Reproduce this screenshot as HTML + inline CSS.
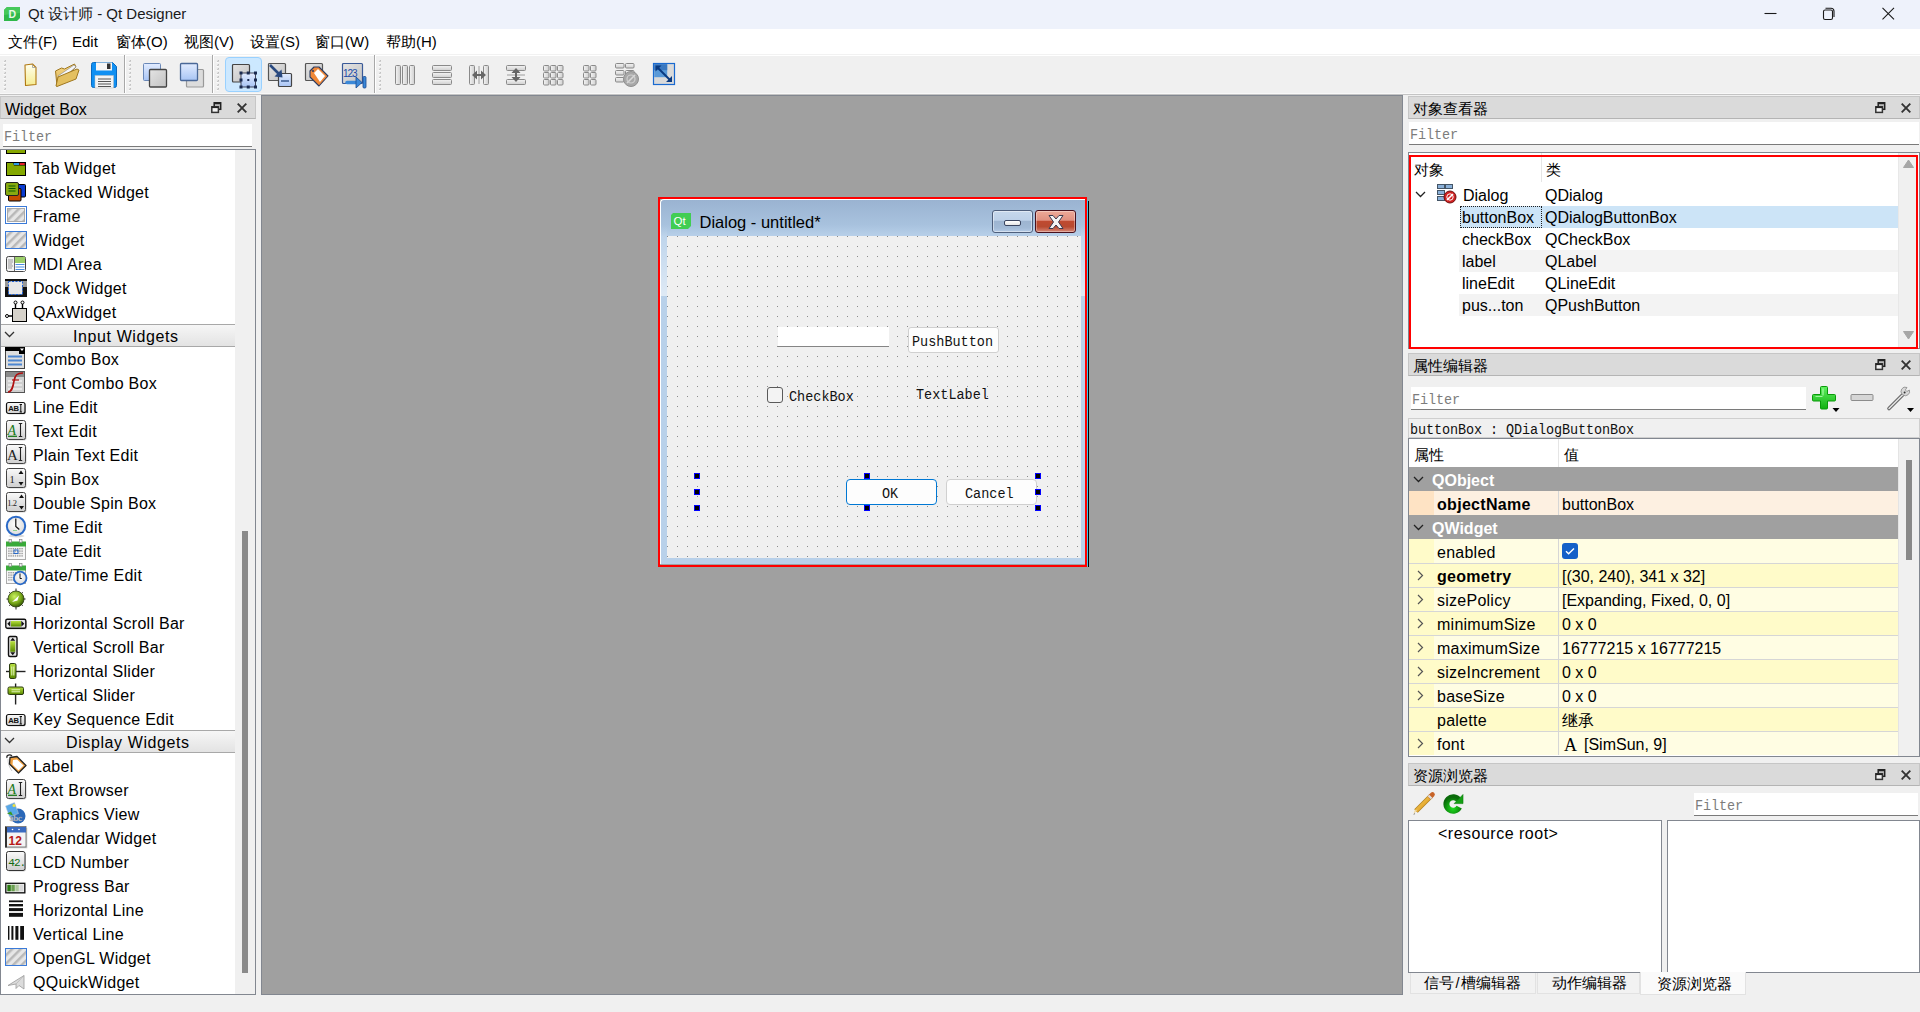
<!DOCTYPE html><html><head><meta charset="utf-8"><style>
*{margin:0;padding:0;box-sizing:border-box}
html,body{width:1920px;height:1012px;overflow:hidden;background:#f0f0f0;font-family:"Liberation Sans",sans-serif;font-size:16px;color:#000}
div{position:absolute}
.t{height:24px;line-height:24px;white-space:nowrap}
.dm{font-family:"Liberation Serif",serif;font-size:15px}
.m{font-family:"Liberation Mono",monospace;font-size:13.33px}
svg{position:absolute;overflow:visible}
</style></head><body>
<div style="left:0px;top:0px;width:1920px;height:29px;background:#eef2fb"></div>
<div class="t" style="left:28px;top:2px;font-size:15px;color:#1a1a1a">Qt 设计师 - Qt Designer</div>
<svg style="left:4px;top:7px" width="16" height="14" viewBox="0 0 16 14"><path d="M3 0H16V11L13 14H0V3z" fill="#2fb84a"/><path d="M0 3L3 0H16V6L0 8z" fill="#45c85a"/><text x="4.5" y="11.3" font-family="Liberation Sans" font-size="10.5" font-weight="bold" fill="#e8f8e8">D</text></svg>
<svg style="left:1764px;top:7px" width="140" height="15" viewBox="0 0 140 15"><path d="M0.5 6.5h12" stroke="#1a1a1a" stroke-width="1.1"/><rect x="59.5" y="3" width="9" height="9.5" rx="1.6" fill="none" stroke="#1a1a1a" stroke-width="1.1"/><path d="M61.5 1.2h5.5a3 3 0 0 1 3 3v5.8" stroke="#1a1a1a" stroke-width="1.1" fill="none"/><path d="M118.5 0.8L130 12.3M130 0.8L118.5 12.3" stroke="#1a1a1a" stroke-width="1.1"/></svg>
<div style="left:0px;top:29px;width:1920px;height:25px;background:#fff"></div>
<div style="left:0px;top:54px;width:1920px;height:1px;background:#f2f2f2"></div>
<div style="left:0px;top:55px;width:1920px;height:1px;background:#fff"></div>
<div class="t" style="left:8px;top:30px;font-size:15px">文件(F)</div>
<div class="t" style="left:72px;top:30px;font-size:15px">Edit</div>
<div class="t" style="left:116px;top:30px;font-size:15px">窗体(O)</div>
<div class="t" style="left:184px;top:30px;font-size:15px">视图(V)</div>
<div class="t" style="left:250px;top:30px;font-size:15px">设置(S)</div>
<div class="t" style="left:315px;top:30px;font-size:15px">窗口(W)</div>
<div class="t" style="left:386px;top:30px;font-size:15px">帮助(H)</div>
<div style="left:0px;top:56px;width:1920px;height:38px;background:#f0f0f0"></div>
<div style="left:0px;top:93px;width:1920px;height:1px;background:#f8f8f8"></div>
<div style="left:0px;top:94px;width:1920px;height:1px;background:#c4c4c4"></div>
<svg width="0" height="0" style="position:absolute"><defs>
<linearGradient id="gsq" x1="0" y1="0" x2="1" y2="1"><stop offset="0" stop-color="#e4e4e4"/><stop offset="1" stop-color="#c2c2c2"/></linearGradient>
<linearGradient id="bsq" x1="0" y1="0" x2="0" y2="1"><stop offset="0" stop-color="#e2ecff"/><stop offset="1" stop-color="#a8c4f4"/></linearGradient>
<linearGradient id="bar" x1="0" y1="0" x2="1" y2="0"><stop offset="0" stop-color="#f4f4f4"/><stop offset="1" stop-color="#cfcfcf"/></linearGradient>
<linearGradient id="barv" x1="0" y1="0" x2="0" y2="1"><stop offset="0" stop-color="#f4f4f4"/><stop offset="1" stop-color="#cfcfcf"/></linearGradient>
<linearGradient id="doc" x1="0" y1="0" x2="0" y2="1"><stop offset="0" stop-color="#fffff0"/><stop offset="1" stop-color="#f6ec90"/></linearGradient>
<linearGradient id="fold" x1="0" y1="0" x2="0" y2="1"><stop offset="0" stop-color="#f8d888"/><stop offset="1" stop-color="#d8b050"/></linearGradient>
</defs></svg>
<svg style="left:0;top:0" width="700" height="95" viewBox="0 0 700 95"><path d="M4 61.5l1.6-1.6v1.6z" fill="#8a8a8a"/><rect x="3.5" y="62" width="2" height="0.8" fill="#fff"/><path d="M4 65.5l1.6-1.6v1.6z" fill="#8a8a8a"/><rect x="3.5" y="66" width="2" height="0.8" fill="#fff"/><path d="M4 69.5l1.6-1.6v1.6z" fill="#8a8a8a"/><rect x="3.5" y="70" width="2" height="0.8" fill="#fff"/><path d="M4 73.5l1.6-1.6v1.6z" fill="#8a8a8a"/><rect x="3.5" y="74" width="2" height="0.8" fill="#fff"/><path d="M4 77.5l1.6-1.6v1.6z" fill="#8a8a8a"/><rect x="3.5" y="78" width="2" height="0.8" fill="#fff"/><path d="M4 81.5l1.6-1.6v1.6z" fill="#8a8a8a"/><rect x="3.5" y="82" width="2" height="0.8" fill="#fff"/><path d="M4 85.5l1.6-1.6v1.6z" fill="#8a8a8a"/><rect x="3.5" y="86" width="2" height="0.8" fill="#fff"/><path d="M4 89.5l1.6-1.6v1.6z" fill="#8a8a8a"/><rect x="3.5" y="90" width="2" height="0.8" fill="#fff"/><path d="M129 61.5l1.6-1.6v1.6z" fill="#8a8a8a"/><rect x="128.5" y="62" width="2" height="0.8" fill="#fff"/><path d="M129 65.5l1.6-1.6v1.6z" fill="#8a8a8a"/><rect x="128.5" y="66" width="2" height="0.8" fill="#fff"/><path d="M129 69.5l1.6-1.6v1.6z" fill="#8a8a8a"/><rect x="128.5" y="70" width="2" height="0.8" fill="#fff"/><path d="M129 73.5l1.6-1.6v1.6z" fill="#8a8a8a"/><rect x="128.5" y="74" width="2" height="0.8" fill="#fff"/><path d="M129 77.5l1.6-1.6v1.6z" fill="#8a8a8a"/><rect x="128.5" y="78" width="2" height="0.8" fill="#fff"/><path d="M129 81.5l1.6-1.6v1.6z" fill="#8a8a8a"/><rect x="128.5" y="82" width="2" height="0.8" fill="#fff"/><path d="M129 85.5l1.6-1.6v1.6z" fill="#8a8a8a"/><rect x="128.5" y="86" width="2" height="0.8" fill="#fff"/><path d="M129 89.5l1.6-1.6v1.6z" fill="#8a8a8a"/><rect x="128.5" y="90" width="2" height="0.8" fill="#fff"/><path d="M217 61.5l1.6-1.6v1.6z" fill="#8a8a8a"/><rect x="216.5" y="62" width="2" height="0.8" fill="#fff"/><path d="M217 65.5l1.6-1.6v1.6z" fill="#8a8a8a"/><rect x="216.5" y="66" width="2" height="0.8" fill="#fff"/><path d="M217 69.5l1.6-1.6v1.6z" fill="#8a8a8a"/><rect x="216.5" y="70" width="2" height="0.8" fill="#fff"/><path d="M217 73.5l1.6-1.6v1.6z" fill="#8a8a8a"/><rect x="216.5" y="74" width="2" height="0.8" fill="#fff"/><path d="M217 77.5l1.6-1.6v1.6z" fill="#8a8a8a"/><rect x="216.5" y="78" width="2" height="0.8" fill="#fff"/><path d="M217 81.5l1.6-1.6v1.6z" fill="#8a8a8a"/><rect x="216.5" y="82" width="2" height="0.8" fill="#fff"/><path d="M217 85.5l1.6-1.6v1.6z" fill="#8a8a8a"/><rect x="216.5" y="86" width="2" height="0.8" fill="#fff"/><path d="M217 89.5l1.6-1.6v1.6z" fill="#8a8a8a"/><rect x="216.5" y="90" width="2" height="0.8" fill="#fff"/><path d="M379 61.5l1.6-1.6v1.6z" fill="#8a8a8a"/><rect x="378.5" y="62" width="2" height="0.8" fill="#fff"/><path d="M379 65.5l1.6-1.6v1.6z" fill="#8a8a8a"/><rect x="378.5" y="66" width="2" height="0.8" fill="#fff"/><path d="M379 69.5l1.6-1.6v1.6z" fill="#8a8a8a"/><rect x="378.5" y="70" width="2" height="0.8" fill="#fff"/><path d="M379 73.5l1.6-1.6v1.6z" fill="#8a8a8a"/><rect x="378.5" y="74" width="2" height="0.8" fill="#fff"/><path d="M379 77.5l1.6-1.6v1.6z" fill="#8a8a8a"/><rect x="378.5" y="78" width="2" height="0.8" fill="#fff"/><path d="M379 81.5l1.6-1.6v1.6z" fill="#8a8a8a"/><rect x="378.5" y="82" width="2" height="0.8" fill="#fff"/><path d="M379 85.5l1.6-1.6v1.6z" fill="#8a8a8a"/><rect x="378.5" y="86" width="2" height="0.8" fill="#fff"/><path d="M379 89.5l1.6-1.6v1.6z" fill="#8a8a8a"/><rect x="378.5" y="90" width="2" height="0.8" fill="#fff"/><rect x="124" y="55" width="1" height="38" fill="#a8a8a8"/><rect x="212" y="55" width="1" height="38" fill="#a8a8a8"/><rect x="374" y="55" width="1" height="38" fill="#a8a8a8"/><rect x="125" y="55" width="1" height="38" fill="#fff"/><rect x="213" y="55" width="1" height="38" fill="#fff"/><rect x="375" y="55" width="1" height="38" fill="#fff"/></svg>
<svg style="left:22px;top:62px" width="18" height="26" viewBox="0 0 18 26"><path d="M3 3L10.5 2 14 5.5v17L3.5 23.5z" fill="url(#doc)" stroke="#b07810" stroke-width="1.1" stroke-linejoin="round"/><path d="M10.5 2.5v3H14" stroke="#999" fill="none" stroke-width=".8"/></svg>
<svg style="left:54px;top:62px" width="27" height="27" viewBox="0 0 27 27"><path d="M1.5 9l6-3 3 1 10-5 1.5 3-19 19z" fill="url(#fold)" stroke="#a07820" stroke-width="1"/><path d="M4 14l16-11 2 2-16 13z" fill="#f4f6fa" stroke="#888" stroke-width=".6"/><path d="M2 24l2-9 19-8 2 1-3 9-19 7.5z" fill="#e4c060" stroke="#a07820" stroke-width="1" stroke-linejoin="round"/></svg>
<svg style="left:90px;top:61px" width="28" height="28" viewBox="0 0 28 28"><path d="M1.5 3.5a2 2 0 0 1 2-2h19l4 4v19a2 2 0 0 1-2 2h-21a2 2 0 0 1-2-2z" fill="#1190f2" stroke="#0a6ac0" stroke-width="1"/><rect x="6" y="1.5" width="16" height="8" fill="#f6f6f6"/><rect x="17" y="2.5" width="3.5" height="5.5" fill="#333"/><rect x="5" y="14.5" width="18.5" height="12.5" fill="#f4f4f4" stroke="#bbb" stroke-width=".5"/><path d="M8 18h13M8 20.5h13M8 23h13M8 25.5h13" stroke="#555" stroke-width="1"/></svg>
<svg style="left:142px;top:62px" width="26" height="27" viewBox="0 0 26 27"><rect x="1.5" y="1.5" width="17" height="17" rx="1" fill="url(#bsq)" stroke="#6a88b8"/><rect x="7.5" y="7.5" width="17" height="17.5" rx="1" fill="url(#gsq)" stroke="#444" stroke-width="1.3"/></svg>
<svg style="left:179px;top:62px" width="26" height="27" viewBox="0 0 26 27"><rect x="7.5" y="7.5" width="17" height="17.5" rx="1" fill="#dcdcdc" stroke="#999" stroke-width="1.2"/><rect x="1.5" y="1.5" width="17" height="17" rx="1" fill="url(#bsq)" stroke="#4a6898" stroke-width="1.3"/></svg>
<div style="left:225px;top:57px;width:37px;height:35px;background:#cce8ff;border:1px solid #99d1ff;border-radius:4px"></div>
<svg style="left:231px;top:63px" width="27" height="27" viewBox="0 0 27 27"><rect x="1.5" y="1.5" width="17" height="17.5" rx="1" fill="url(#gsq)" stroke="#444" stroke-width="1.2"/><rect x="10" y="10" width="14.5" height="14" fill="url(#bsq)" stroke="#223" stroke-width=".8"/><rect x="8.5" y="8.5" width="3" height="3" fill="#1a2a50"/><rect x="8.5" y="15.5" width="3" height="3" fill="#1a2a50"/><rect x="8.5" y="22.5" width="3" height="3" fill="#1a2a50"/><rect x="15.75" y="8.5" width="3" height="3" fill="#1a2a50"/><rect x="15.75" y="22.5" width="3" height="3" fill="#1a2a50"/><rect x="23.0" y="8.5" width="3" height="3" fill="#1a2a50"/><rect x="23.0" y="15.5" width="3" height="3" fill="#1a2a50"/><rect x="23.0" y="22.5" width="3" height="3" fill="#1a2a50"/><rect x="16.3" y="16" width="2" height="2" fill="#1a2a50"/></svg>
<svg style="left:267px;top:62px" width="26" height="26" viewBox="0 0 26 26"><rect x="1.5" y="1.5" width="17" height="17" rx="1" fill="url(#gsq)" stroke="#555" stroke-width="1.2"/><rect x="11.5" y="11.5" width="13" height="13" rx="1" fill="url(#bsq)" stroke="#444" stroke-width="1.2"/><path d="M14 19h8" stroke="#5a78a8" stroke-width="2"/><path d="M3 3l10 10" stroke="#2a4a80" stroke-width="2.6"/><path d="M15.5 15.5l-8-1 7-7z" fill="#2a4a80"/></svg>
<svg style="left:304px;top:62px" width="26" height="27" viewBox="0 0 26 27"><rect x="1.5" y="1.5" width="17" height="17" rx="1" fill="url(#gsq)" stroke="#555" stroke-width="1.2"/><path d="M6 9l4-4h5l9 9-9 10-9-9z" fill="#f08838" stroke="#2a3a60" stroke-width="1.1" stroke-linejoin="round"/><path d="M10 11l4-4 7 7-5 6z" fill="#fff"/><circle cx="9" cy="9" r="1" fill="#2a3a60"/></svg>
<svg style="left:341px;top:62px" width="27" height="27" viewBox="0 0 27 27"><rect x="1.5" y="1.5" width="20" height="20" rx="1" fill="url(#gsq)" stroke="#3a5a98" stroke-width="1.2"/><text x="2" y="14.5" font-family="Liberation Sans" font-size="10" fill="#1a4aa8" letter-spacing="-1">123</text><path d="M6 20.5h10" stroke="#3a88d8" stroke-width="3.5" stroke-linecap="round"/><path d="M15 15l6 5.5-6 5.5z" fill="#3a88d8" stroke="#1a4a90" stroke-width=".8"/><rect x="22" y="14.5" width="3" height="11.5" rx="1" fill="#3a88d8" stroke="#1a4a90" stroke-width=".8"/></svg>
<svg style="left:395px;top:65px" width="21" height="21" viewBox="0 0 21 21"><rect x="0.5" y="0.5" width="5" height="19" rx="1" fill="url(#bar)" stroke="#8a8a8a"/><rect x="7.5" y="0.5" width="5" height="19" rx="1" fill="url(#bar)" stroke="#8a8a8a"/><rect x="14.5" y="0.5" width="5" height="19" rx="1" fill="url(#bar)" stroke="#8a8a8a"/></svg>
<svg style="left:432px;top:65px" width="21" height="21" viewBox="0 0 21 21"><rect x="0.5" y="0.5" width="19" height="5" rx="1" fill="url(#barv)" stroke="#8a8a8a"/><rect x="0.5" y="7.5" width="19" height="5" rx="1" fill="url(#barv)" stroke="#8a8a8a"/><rect x="0.5" y="14.5" width="19" height="5" rx="1" fill="url(#barv)" stroke="#8a8a8a"/></svg>
<svg style="left:469px;top:65px" width="21" height="21" viewBox="0 0 21 21"><rect x="0.5" y="0.5" width="5" height="19" rx="1" fill="url(#bar)" stroke="#8a8a8a"/><rect x="14.5" y="0.5" width="5" height="19" rx="1" fill="url(#bar)" stroke="#8a8a8a"/><path d="M10 1v18" stroke="#888" stroke-width=".8"/><path d="M3 10l5-4.5v9zM17 10l-5-4.5v9z" fill="#666"/><path d="M7 10h6" stroke="#666" stroke-width="2"/></svg>
<svg style="left:506px;top:65px" width="21" height="21" viewBox="0 0 21 21"><rect x="0.5" y="0.5" width="19" height="5" rx="1" fill="url(#barv)" stroke="#8a8a8a"/><rect x="0.5" y="14.5" width="19" height="5" rx="1" fill="url(#barv)" stroke="#8a8a8a"/><path d="M1 10h18" stroke="#888" stroke-width=".8"/><path d="M10 3l-4.5 5h9zM10 17l-4.5-5h9z" fill="#666"/><path d="M10 7v6" stroke="#666" stroke-width="2"/></svg>
<svg style="left:543px;top:65px" width="21" height="21" viewBox="0 0 21 21"><rect x="0.5" y="0.5" width="5.5" height="5.5" rx="1" fill="url(#bar)" stroke="#8a8a8a"/><rect x="0.5" y="7.5" width="5.5" height="5.5" rx="1" fill="url(#bar)" stroke="#8a8a8a"/><rect x="0.5" y="14.5" width="5.5" height="5.5" rx="1" fill="url(#bar)" stroke="#8a8a8a"/><rect x="7.5" y="0.5" width="5.5" height="5.5" rx="1" fill="url(#bar)" stroke="#8a8a8a"/><rect x="7.5" y="7.5" width="5.5" height="5.5" rx="1" fill="url(#bar)" stroke="#8a8a8a"/><rect x="7.5" y="14.5" width="5.5" height="5.5" rx="1" fill="url(#bar)" stroke="#8a8a8a"/><rect x="14.5" y="0.5" width="5.5" height="5.5" rx="1" fill="url(#bar)" stroke="#8a8a8a"/><rect x="14.5" y="7.5" width="5.5" height="5.5" rx="1" fill="url(#bar)" stroke="#8a8a8a"/><rect x="14.5" y="14.5" width="5.5" height="5.5" rx="1" fill="url(#bar)" stroke="#8a8a8a"/></svg>
<svg style="left:583px;top:65px" width="14" height="21" viewBox="0 0 14 21"><rect x="0.5" y="0.5" width="5.5" height="5.5" rx="1" fill="url(#bar)" stroke="#8a8a8a"/><rect x="0.5" y="7.5" width="5.5" height="5.5" rx="1" fill="url(#bar)" stroke="#8a8a8a"/><rect x="0.5" y="14.5" width="5.5" height="5.5" rx="1" fill="url(#bar)" stroke="#8a8a8a"/><rect x="7.5" y="0.5" width="5.5" height="5.5" rx="1" fill="url(#bar)" stroke="#8a8a8a"/><rect x="7.5" y="7.5" width="5.5" height="5.5" rx="1" fill="url(#bar)" stroke="#8a8a8a"/><rect x="7.5" y="14.5" width="5.5" height="5.5" rx="1" fill="url(#bar)" stroke="#8a8a8a"/></svg>
<svg style="left:615px;top:63px" width="25" height="25" viewBox="0 0 25 25"><rect x="0.5" y="0.5" width="8.5" height="4.5" rx="1" fill="url(#barv)" stroke="#8a8a8a"/><rect x="10.5" y="0.5" width="8.5" height="4.5" rx="1" fill="url(#barv)" stroke="#8a8a8a"/><rect x="0.5" y="7.5" width="8.5" height="4.5" rx="1" fill="url(#barv)" stroke="#8a8a8a"/><rect x="10.5" y="7.5" width="8.5" height="4.5" rx="1" fill="url(#barv)" stroke="#8a8a8a"/><rect x="0.5" y="14.5" width="8.5" height="4.5" rx="1" fill="url(#barv)" stroke="#8a8a8a"/><circle cx="16" cy="16" r="7.5" fill="#a8a8a8" stroke="#909090"/><path d="M12 20l8-8" stroke="#d8d8d8" stroke-width="1.6"/><circle cx="16" cy="16" r="4" fill="none" stroke="#d0d0d0" stroke-width="1.2"/></svg>
<svg style="left:653px;top:63px" width="23" height="23" viewBox="0 0 23 23"><rect x="0.5" y="0.5" width="21" height="21" fill="#dadada" stroke="#1a6ad0" stroke-width="1.2"/><rect x="1.2" y="1.2" width="13" height="13" fill="#5a9ad8"/><rect x="1.2" y="1.2" width="13" height="6" fill="#3a78c0"/><path d="M3.5 3.5L18 18" stroke="#0a3a80" stroke-width="2"/><path d="M2.5 2.5h6l-6 6zM19 19h-6l6-6z" fill="#0a3a80"/></svg>
<div style="left:261px;top:95px;width:1142px;height:900px;background:#a0a0a0;border:1px solid #828790"></div>
<div style="left:658px;top:197px;width:429px;height:370px;border:2px solid #f00"></div>
<div style="left:1087px;top:200px;width:1px;height:366px;background:#3cc8f0"></div>
<div style="left:1088px;top:201px;width:1px;height:366px;background:#000"></div>
<div style="left:660px;top:199px;width:425px;height:365px;background:linear-gradient(#9ab3d1 0px,#a8c2de 25px,#b9d1ea 37px,#b9d1ea 100%);border-top:1px solid #fff;border-left:1px solid #fff;border-top-left-radius:4px"></div>
<svg style="left:671px;top:213px" width="20" height="16" viewBox="0 0 20 16"><path d="M2 0H20V13L17 16H0V2z" fill="#41cd52"/><text x="2.6" y="12" font-family="Liberation Sans" font-size="11.5" fill="#fff">Qt</text></svg>
<div class="t" style="left:699.5px;top:209.5px;font-size:16.5px;color:#000">Dialog - untitled*</div>
<div style="left:992px;top:210px;width:41px;height:23px;border:1px solid #4e5f7c;border-radius:3px;background:linear-gradient(#c6d8ec 0%,#bcd0e8 45%,#9db4d0 46%,#a2bad6 80%,#b4cae6 100%);box-shadow:inset 0 0 0 1px rgba(255,255,255,.45)"></div>
<div style="left:1004px;top:220px;width:17px;height:6px;background:linear-gradient(#fff,#e6e6e6);border:1px solid #3a4560;border-radius:2px"></div>
<div style="left:1035px;top:210px;width:41px;height:23px;border:1px solid #48101c;border-radius:3px;background:linear-gradient(#eeaa98 0%,#e09080 45%,#c04a30 46%,#b84a30 75%,#d88878 100%);box-shadow:inset 0 0 0 1px rgba(255,255,255,.35)"></div>
<svg style="left:1046px;top:213px" width="20" height="18" viewBox="0 0 20 18"><path d="M3 2.5L7 2.5 10 6 13 2.5 17 2.5 12.5 9 17 15.5 13 15.5 10 12 7 15.5 3 15.5 7.5 9z" fill="#f4f4f4" stroke="#3a3a50" stroke-width="1" stroke-linejoin="round"/></svg>
<div style="left:661px;top:226px;width:6px;height:70px;background:linear-gradient(rgba(255,255,255,0),rgba(255,255,255,.55))"></div>
<div style="left:1081px;top:226px;width:4px;height:70px;background:linear-gradient(rgba(255,255,255,0),rgba(255,255,255,.55))"></div>
<div style="left:667px;top:236px;width:414px;height:322px;background-color:#f0f0f0;background-image:radial-gradient(circle at 0.5px 0.5px,#8c8c8c 0.7px,transparent 0.8px);background-size:10px 10px"></div>
<div style="left:778px;top:327px;width:111px;height:20px;background:#fff;border-bottom:1px solid #858585"></div>
<div style="left:908px;top:327px;width:91px;height:26px;background:#fdfdfd;border:1px solid #d0d0d0;border-radius:3px"></div>
<svg style="left:912px;top:330px" width="87" height="22" viewBox="0 0 87 22"><text transform="scale(0.9,1)" x="4.50 13.50 22.50 31.50 40.50 49.50 58.50 67.50 76.50 85.50" y="16" text-anchor="middle" font-family="Liberation Mono" font-size="15" fill="#111" >PushButton</text></svg>
<div style="left:767px;top:387px;width:16px;height:16px;background:#f3f3f3;border:1.3px solid #5a5a5a;border-radius:3px"></div>
<svg style="left:789px;top:385px" width="71" height="22" viewBox="0 0 71 22"><text transform="scale(0.9,1)" x="4.50 13.50 22.50 31.50 40.50 49.50 58.50 67.50" y="16" text-anchor="middle" font-family="Liberation Mono" font-size="15" fill="#111" >CheckBox</text></svg>
<svg style="left:916px;top:383px" width="79" height="22" viewBox="0 0 79 22"><text transform="scale(0.9,1)" x="4.50 13.50 22.50 31.50 40.50 49.50 58.50 67.50 76.50" y="16" text-anchor="middle" font-family="Liberation Mono" font-size="15" fill="#111" >TextLabel</text></svg>
<div style="left:846px;top:479px;width:91px;height:26px;background:#fdfdfd;border:1px solid #0078d4;border-radius:4px"></div>
<svg style="left:882px;top:482px" width="22" height="22" viewBox="0 0 22 22"><text transform="scale(0.9,1)" x="4.50 13.50" y="16" text-anchor="middle" font-family="Liberation Mono" font-size="15" fill="#111" >OK</text></svg>
<div style="left:946px;top:479px;width:91px;height:26px;background:#fdfdfd;border:1px solid #d0d0d0;border-radius:4px"></div>
<svg style="left:965px;top:482px" width="55" height="22" viewBox="0 0 55 22"><text transform="scale(0.9,1)" x="4.50 13.50 22.50 31.50 40.50 49.50" y="16" text-anchor="middle" font-family="Liberation Mono" font-size="15" fill="#111" >Cancel</text></svg>
<div style="left:694px;top:473px;width:6px;height:6px;background:#000;border:1px solid #0000ff"></div>
<div style="left:694px;top:489px;width:6px;height:6px;background:#000;border:1px solid #0000ff"></div>
<div style="left:694px;top:505px;width:6px;height:6px;background:#000;border:1px solid #0000ff"></div>
<div style="left:864px;top:473px;width:6px;height:6px;background:#000;border:1px solid #0000ff"></div>
<div style="left:864px;top:505px;width:6px;height:6px;background:#000;border:1px solid #0000ff"></div>
<div style="left:1035px;top:473px;width:6px;height:6px;background:#000;border:1px solid #0000ff"></div>
<div style="left:1035px;top:489px;width:6px;height:6px;background:#000;border:1px solid #0000ff"></div>
<div style="left:1035px;top:505px;width:6px;height:6px;background:#000;border:1px solid #0000ff"></div>
<svg width="0" height="0" style="position:absolute"><defs><linearGradient id="ig" x1="0" y1="0" x2="0" y2="1"><stop offset="0" stop-color="#fafafa"/><stop offset="1" stop-color="#cfcfcf"/></linearGradient><linearGradient id="gg" x1="0" y1="0" x2="0" y2="1"><stop offset="0" stop-color="#b8e040"/><stop offset="1" stop-color="#5a8a00"/></linearGradient><radialGradient id="dg" cx=".4" cy=".35" r=".7"><stop offset="0" stop-color="#c8f060"/><stop offset=".6" stop-color="#78a818"/><stop offset="1" stop-color="#2a4a00"/></radialGradient><radialGradient id="cf" cx=".45" cy=".4" r=".7"><stop offset="0" stop-color="#fff"/><stop offset="1" stop-color="#d4d4d4"/></radialGradient></defs></svg>
<div style="left:0px;top:149px;width:256px;height:846px;background:#fff;border:1px solid #828790"></div>
<div style="left:235px;top:150px;width:20px;height:844px;background:#f0f0f0"></div>
<div style="left:242px;top:531px;width:6px;height:442px;background:#8a8a8a"></div>
<div style="left:1px;top:150px;width:234px;height:8px;overflow:hidden"><svg style="left:4px;top:0px" width="22" height="8" viewBox="0 0 22 8"><rect x="1.5" y="-2.5" width="19" height="6" fill="#86a600" stroke="#000"/></svg></div>
<svg style="left:5px;top:156px" width="22" height="22" viewBox="0 0 22 22"><rect x="1.5" y="6.5" width="19" height="13" fill="#84a800" stroke="#000"/><path d="M8 6.5h12.5v3H9z" fill="#000"/><rect x="8.7" y="7" width="5.5" height="2" fill="#2a9be8"/><rect x="14.7" y="7" width="5" height="2" fill="#e8202a"/></svg>
<div class="t" style="left:33px;top:157px;letter-spacing:0.28px">Tab Widget</div>
<svg style="left:5px;top:180px" width="22" height="22" viewBox="0 0 22 22"><rect x="12.5" y="4.5" width="8" height="12.5" rx="1" fill="#0b3bd0" stroke="#000"/><rect x="3.5" y="8.5" width="12.5" height="12.5" rx="1" fill="#c44c00" stroke="#000"/><rect x="0.5" y="2.5" width="13" height="13" rx="1.5" fill="#88aa10" stroke="#222"/><path d="M3.5 6h7M3.5 8.5h7M3.5 11h7" stroke="#0b5a00" stroke-width="1.2"/></svg>
<div class="t" style="left:33px;top:181px;letter-spacing:0.28px">Stacked Widget</div>
<svg style="left:5px;top:204px" width="22" height="22" viewBox="0 0 22 22"><defs><pattern id="hp" width="6" height="6" patternUnits="userSpaceOnUse" patternTransform="rotate(45)"><rect width="6" height="6" fill="#e6e6e6"/><rect width="2.5" height="6" fill="#b8b8b8"/></pattern></defs><rect x="0.5" y="2.5" width="21" height="17" fill="#fff" stroke="#3a7ad8"/><rect x="2.5" y="4.5" width="17" height="13" fill="url(#hp)" stroke="#aaa"/></svg>
<div class="t" style="left:33px;top:205px;letter-spacing:0.28px">Frame</div>
<svg style="left:5px;top:228px" width="22" height="22" viewBox="0 0 22 22"><rect x="0.5" y="3.5" width="21" height="17" fill="url(#hp)" stroke="#3a7ad8"/></svg>
<div class="t" style="left:33px;top:229px;letter-spacing:0.28px">Widget</div>
<svg style="left:5px;top:252px" width="22" height="22" viewBox="0 0 22 22"><rect x="1.5" y="4.5" width="19" height="15" rx="2" fill="#f2f2f2" stroke="#444"/><rect x="10" y="5" width="10" height="6" fill="#9ccf6a"/><path d="M10 11h10v8h-10z" fill="#fff"/><path d="M10.5 12.5h9M10.5 15h9M10.5 17.5h9" stroke="#4a8de0"/><path d="M3 8h5M3 10h5M3 12h4M3 14h5M3 16h4" stroke="#999"/><path d="M9.5 5v14" stroke="#666"/></svg>
<div class="t" style="left:33px;top:253px;letter-spacing:0.28px">MDI Area</div>
<svg style="left:5px;top:276px" width="22" height="22" viewBox="0 0 22 22"><rect x="0" y="3" width="22" height="18" fill="#111"/><rect x="0" y="5" width="22" height="6" fill="#999"/><rect x="3.5" y="5.5" width="14" height="13" fill="#e8e8e8" stroke="#1a5fd8" stroke-dasharray="2 1.5"/></svg>
<div class="t" style="left:33px;top:277px;letter-spacing:0.28px">Dock Widget</div>
<svg style="left:5px;top:300px" width="22" height="22" viewBox="0 0 22 22"><rect x="7.5" y="8.5" width="14" height="13" fill="#d6d2ca" stroke="#000"/><path d="M10.5 8V3.5M17.5 8V3.5M7 16H2.5" stroke="#000" stroke-width="1.4"/><circle cx="10.5" cy="2.5" r="1.5" fill="#fff" stroke="#000"/><circle cx="17.5" cy="2.5" r="1.5" fill="#fff" stroke="#000"/><circle cx="2" cy="16" r="1.5" fill="#fff" stroke="#000"/></svg>
<div class="t" style="left:33px;top:301px;letter-spacing:0.28px">QAxWidget</div>
<div style="left:1px;top:324px;width:234px;height:23px;background:linear-gradient(#f6f6f6,#e3e3e3);border-top:1px solid #a8a8a8;border-bottom:1px solid #a8a8a8"></div>
<svg style="left:4px;top:331px" width="11" height="7" viewBox="0 0 11 7"><path d="M1 1l4.5 4.5L10 1" stroke="#333" stroke-width="1.3" fill="none"/></svg>
<div class="t" style="left:73px;top:325px;letter-spacing:0.6px">Input Widgets</div>
<svg style="left:5px;top:347px" width="22" height="22" viewBox="0 0 22 22"><rect x="0.5" y="0.5" width="19" height="21" fill="#dedede" stroke="#444"/><rect x="0" y="0" width="20" height="4" fill="#000"/><path d="M14 4h6v3h-6z" fill="#000"/><path d="M15 1.5h4l-2 2.5z" fill="#fff"/><path d="M3 9.5h14M3 13.5h14M3 17.5h14" stroke="#4d86d0" stroke-width="2"/></svg>
<div class="t" style="left:33px;top:348px;letter-spacing:0.28px">Combo Box</div>
<svg style="left:5px;top:371px" width="22" height="22" viewBox="0 0 22 22"><rect x="0.5" y="0.5" width="19" height="21" fill="#cfcfcf" stroke="#555"/><rect x="1" y="1" width="18" height="5" fill="#8a8a8a"/><path d="M3 10h14M3 14h14M3 18h14" stroke="#e6e6e6" stroke-width="2"/><path d="M3 21C7 21 8 16 9 10S12 2 18 2" stroke="#b01010" stroke-width="1.6" fill="none"/><path d="M7 9h7" stroke="#b01010" stroke-width="1.2"/></svg>
<div class="t" style="left:33px;top:372px;letter-spacing:0.28px">Font Combo Box</div>
<svg style="left:5px;top:395px" width="22" height="22" viewBox="0 0 22 22"><rect x="1.5" y="7.5" width="18.5" height="11" rx="2" fill="#000" opacity=".18" transform="translate(1 1)"/><rect x="1.5" y="7.5" width="18.5" height="11" rx="2" fill="url(#ig)" stroke="#111" stroke-width="1.2"/><text x="3.2" y="15.8" font-family="Liberation Sans" font-size="7.6" font-weight="bold" fill="#111" letter-spacing="-.2">AB</text><path d="M15.8 9.5v7.5M14.6 9.5h2.4M14.6 17h2.4" stroke="#111" stroke-width="1"/></svg>
<div class="t" style="left:33px;top:396px;letter-spacing:0.28px">Line Edit</div>
<svg style="left:5px;top:419px" width="22" height="22" viewBox="0 0 22 22"><rect x="1.5" y="1.5" width="19" height="19" rx="2" fill="#000" opacity=".18" transform="translate(1 1)"/><rect x="1.5" y="1.5" width="19" height="19" rx="2" fill="url(#ig)" stroke="#444" stroke-width="1"/><text x="2.6" y="16" font-family="Liberation Serif" font-style="italic" font-size="14" fill="#1a7a1a">A</text><path d="M3 17.3h9" stroke="#1a7a1a" stroke-width="1.3"/><path d="M15.5 4.5v13M13.8 4.5h3.4M13.8 17.5h3.4" stroke="#222" stroke-width="1.1"/></svg>
<div class="t" style="left:33px;top:420px;letter-spacing:0.28px">Text Edit</div>
<svg style="left:5px;top:443px" width="22" height="22" viewBox="0 0 22 22"><rect x="1.5" y="1.5" width="19" height="19" rx="2" fill="#000" opacity=".18" transform="translate(1 1)"/><rect x="1.5" y="1.5" width="19" height="19" rx="2" fill="url(#ig)" stroke="#444" stroke-width="1"/><text x="2" y="17" font-family="Liberation Serif" font-size="15" fill="#222">A</text><path d="M15.5 4.5v13M13.8 4.5h3.4M13.8 17.5h3.4" stroke="#222" stroke-width="1.1"/></svg>
<div class="t" style="left:33px;top:444px;letter-spacing:0.28px">Plain Text Edit</div>
<svg style="left:5px;top:467px" width="22" height="22" viewBox="0 0 22 22"><rect x="1.5" y="1.5" width="19" height="19" rx="2" fill="#000" opacity=".18" transform="translate(1 1)"/><rect x="1.5" y="1.5" width="19" height="19" rx="2" fill="url(#ig)" stroke="#444" stroke-width="1"/><text x="4.5" y="15.5" font-family="Liberation Serif" font-size="10.5" fill="#222">1</text><path d="M13.5 7l2.5-3.5 2.5 3.5zM13.5 15l2.5 3.5 2.5-3.5z" fill="#111"/></svg>
<div class="t" style="left:33px;top:468px;letter-spacing:0.28px">Spin Box</div>
<svg style="left:5px;top:491px" width="22" height="22" viewBox="0 0 22 22"><rect x="1.5" y="1.5" width="19" height="19" rx="2" fill="#000" opacity=".18" transform="translate(1 1)"/><rect x="1.5" y="1.5" width="19" height="19" rx="2" fill="url(#ig)" stroke="#444" stroke-width="1"/><text x="2.3" y="15" font-family="Liberation Serif" font-size="8.5" fill="#222" letter-spacing="-.5">1.2</text><path d="M14 7l2.5-3.5 2.5 3.5zM14 15l2.5 3.5 2.5-3.5z" fill="#111"/></svg>
<div class="t" style="left:33px;top:492px;letter-spacing:0.28px">Double Spin Box</div>
<svg style="left:5px;top:515px" width="22" height="22" viewBox="0 0 22 22"><ellipse cx="11.5" cy="21" rx="8" ry="1.5" fill="#000" opacity=".15"/><circle cx="11" cy="11" r="9.2" fill="url(#cf)" stroke="#2a6ac8" stroke-width="2"/><path d="M10.8 3.5V11.5l3.5 3" stroke="#111" stroke-width="1.2" fill="none"/><path d="M8 15.5h4" stroke="#7c7" stroke-width=".8"/></svg>
<div class="t" style="left:33px;top:516px;letter-spacing:0.28px">Time Edit</div>
<svg style="left:5px;top:539px" width="22" height="22" viewBox="0 0 22 22"><rect x="1.5" y="4.5" width="19" height="16" fill="#f8f8f8" stroke="#aaa"/><rect x="1" y="2.5" width="20" height="5" fill="#3aaa3a"/><rect x="4" y="0.5" width="2.5" height="3" fill="#eee" stroke="#777" stroke-width=".6"/><rect x="14.5" y="0.5" width="2.5" height="3" fill="#eee" stroke="#777" stroke-width=".6"/><rect x="3.2" y="9.0" width="1.4" height="1.4" fill="#999"/><rect x="3.2" y="11.4" width="1.4" height="1.4" fill="#999"/><rect x="3.2" y="13.8" width="1.4" height="1.4" fill="#999"/><rect x="3.2" y="16.2" width="1.4" height="1.4" fill="#999"/><rect x="5.4" y="9.0" width="1.4" height="1.4" fill="#999"/><rect x="5.4" y="11.4" width="1.4" height="1.4" fill="#999"/><rect x="5.4" y="13.8" width="1.4" height="1.4" fill="#999"/><rect x="5.4" y="16.2" width="1.4" height="1.4" fill="#999"/><rect x="7.6000000000000005" y="9.0" width="1.4" height="1.4" fill="#999"/><rect x="7.6000000000000005" y="11.4" width="1.4" height="1.4" fill="#999"/><rect x="7.6000000000000005" y="13.8" width="1.4" height="1.4" fill="#999"/><rect x="7.6000000000000005" y="16.2" width="1.4" height="1.4" fill="#999"/><rect x="9.8" y="9.0" width="1.4" height="1.4" fill="#999"/><rect x="9.8" y="11.4" width="1.4" height="1.4" fill="#999"/><rect x="9.8" y="13.8" width="1.4" height="1.4" fill="#999"/><rect x="9.8" y="16.2" width="1.4" height="1.4" fill="#999"/><rect x="12.0" y="9.0" width="1.4" height="1.4" fill="#999"/><rect x="12.0" y="11.4" width="1.4" height="1.4" fill="#999"/><rect x="12.0" y="13.8" width="1.4" height="1.4" fill="#999"/><rect x="12.0" y="16.2" width="1.4" height="1.4" fill="#999"/><rect x="14.2" y="9.0" width="1.4" height="1.4" fill="#999"/><rect x="14.2" y="11.4" width="1.4" height="1.4" fill="#999"/><rect x="14.2" y="13.8" width="1.4" height="1.4" fill="#999"/><rect x="14.2" y="16.2" width="1.4" height="1.4" fill="#999"/><rect x="16.400000000000002" y="9.0" width="1.4" height="1.4" fill="#999"/><rect x="16.400000000000002" y="11.4" width="1.4" height="1.4" fill="#999"/><rect x="16.400000000000002" y="13.8" width="1.4" height="1.4" fill="#999"/><rect x="16.400000000000002" y="16.2" width="1.4" height="1.4" fill="#999"/><rect x="9" y="11" width="4" height="3.5" fill="none" stroke="#2a6ac8" stroke-width="1"/></svg>
<div class="t" style="left:33px;top:540px;letter-spacing:0.28px">Date Edit</div>
<svg style="left:5px;top:563px" width="22" height="22" viewBox="0 0 22 22"><rect x="1.5" y="4.5" width="19" height="16" fill="#f8f8f8" stroke="#aaa"/><rect x="1" y="2.5" width="20" height="5" fill="#3aaa3a"/><rect x="4" y="0.5" width="2.5" height="3" fill="#eee" stroke="#777" stroke-width=".6"/><rect x="14.5" y="0.5" width="2.5" height="3" fill="#eee" stroke="#777" stroke-width=".6"/><rect x="3.2" y="9.0" width="1.4" height="1.4" fill="#999"/><rect x="3.2" y="11.4" width="1.4" height="1.4" fill="#999"/><rect x="3.2" y="13.8" width="1.4" height="1.4" fill="#999"/><rect x="3.2" y="16.2" width="1.4" height="1.4" fill="#999"/><rect x="5.4" y="9.0" width="1.4" height="1.4" fill="#999"/><rect x="5.4" y="11.4" width="1.4" height="1.4" fill="#999"/><rect x="5.4" y="13.8" width="1.4" height="1.4" fill="#999"/><rect x="5.4" y="16.2" width="1.4" height="1.4" fill="#999"/><rect x="7.6000000000000005" y="9.0" width="1.4" height="1.4" fill="#999"/><rect x="7.6000000000000005" y="11.4" width="1.4" height="1.4" fill="#999"/><rect x="7.6000000000000005" y="13.8" width="1.4" height="1.4" fill="#999"/><rect x="7.6000000000000005" y="16.2" width="1.4" height="1.4" fill="#999"/><rect x="9.8" y="9.0" width="1.4" height="1.4" fill="#999"/><rect x="9.8" y="11.4" width="1.4" height="1.4" fill="#999"/><rect x="9.8" y="13.8" width="1.4" height="1.4" fill="#999"/><rect x="9.8" y="16.2" width="1.4" height="1.4" fill="#999"/><rect x="12.0" y="9.0" width="1.4" height="1.4" fill="#999"/><rect x="12.0" y="11.4" width="1.4" height="1.4" fill="#999"/><rect x="12.0" y="13.8" width="1.4" height="1.4" fill="#999"/><rect x="12.0" y="16.2" width="1.4" height="1.4" fill="#999"/><circle cx="15.2" cy="15" r="6.3" fill="url(#cf)" stroke="#2a6ac8" stroke-width="1.8"/><path d="M15 10.5v5h1.8" stroke="#111" stroke-width="1" fill="none"/></svg>
<div class="t" style="left:33px;top:564px;letter-spacing:0.28px">Date/Time Edit</div>
<svg style="left:5px;top:587px" width="22" height="22" viewBox="0 0 22 22"><path d="M11 1.5v3M11 19.5v3M1.5 12h3M17.5 12h3M4.3 5.3l2 2M15.7 16.7l2 2M4.3 18.7l2-2M15.7 7.3l2-2" stroke="#222" stroke-width="1"/><circle cx="11" cy="12" r="8" fill="url(#dg)" stroke="#2a3a10" stroke-width=".8"/><path d="M7 15l7-6.5-1.5 5z" fill="#fff"/></svg>
<div class="t" style="left:33px;top:588px;letter-spacing:0.28px">Dial</div>
<svg style="left:5px;top:611px" width="22" height="22" viewBox="0 0 22 22"><rect x="1" y="8.5" width="20" height="9" rx="1.5" fill="#000" opacity=".2" transform="translate(1 1)"/><rect x="0.8" y="8.3" width="20" height="9" rx="1.5" fill="#e8e8e8" stroke="#111" stroke-width="1.4"/><rect x="6" y="10" width="10" height="5.6" fill="url(#gg)"/><path d="M2.3 12.8l3-3v6zM19.3 12.8l-3-3v6z" fill="#111"/></svg>
<div class="t" style="left:33px;top:612px;letter-spacing:0.28px">Horizontal Scroll Bar</div>
<svg style="left:5px;top:635px" width="22" height="22" viewBox="0 0 22 22"><rect x="3.5" y="1.5" width="8.5" height="20" rx="1.5" fill="#e8e8e8" stroke="#111" stroke-width="1.4"/><rect x="5.2" y="6.2" width="5.1" height="10.6" fill="url(#gg)"/><path d="M7.75 2.7l-2.5 3h5zM7.75 20.3l-2.5-3h5z" fill="#111"/></svg>
<div class="t" style="left:33px;top:636px;letter-spacing:0.28px">Vertical Scroll Bar</div>
<svg style="left:5px;top:659px" width="22" height="22" viewBox="0 0 22 22"><path d="M1 12.5h19.5" stroke="#222" stroke-width="1.4"/><rect x="4.5" y="4.5" width="6.5" height="15" rx="1.5" fill="url(#gg)" stroke="#2a3a10" stroke-width="1"/><path d="M6.8 7.5v9M8.8 7.5v9" stroke="#f0ffd0" stroke-width=".9"/></svg>
<div class="t" style="left:33px;top:660px;letter-spacing:0.28px">Horizontal Slider</div>
<svg style="left:5px;top:683px" width="22" height="22" viewBox="0 0 22 22"><path d="M10.6 0.5v21" stroke="#222" stroke-width="1.4"/><rect x="3" y="4" width="15.5" height="7.5" rx="1.5" fill="url(#gg)" stroke="#2a3a10" stroke-width="1"/><path d="M6.5 6.8h8.5M6.5 8.8h8.5" stroke="#f0ffd0" stroke-width=".9"/></svg>
<div class="t" style="left:33px;top:684px;letter-spacing:0.28px">Vertical Slider</div>
<svg style="left:5px;top:707px" width="22" height="22" viewBox="0 0 22 22"><rect x="1.5" y="7.5" width="18.5" height="11" rx="2" fill="#000" opacity=".18" transform="translate(1 1)"/><rect x="1.5" y="7.5" width="18.5" height="11" rx="2" fill="url(#ig)" stroke="#111" stroke-width="1.2"/><text x="3.2" y="15.8" font-family="Liberation Sans" font-size="7.6" font-weight="bold" fill="#111" letter-spacing="-.2">AB</text><path d="M15.8 9.5v7.5M14.6 9.5h2.4M14.6 17h2.4" stroke="#111" stroke-width="1"/></svg>
<div class="t" style="left:33px;top:708px;letter-spacing:0.28px">Key Sequence Edit</div>
<div style="left:1px;top:730px;width:234px;height:23px;background:linear-gradient(#f6f6f6,#e3e3e3);border-top:1px solid #a8a8a8;border-bottom:1px solid #a8a8a8"></div>
<svg style="left:4px;top:737px" width="11" height="7" viewBox="0 0 11 7"><path d="M1 1l4.5 4.5L10 1" stroke="#333" stroke-width="1.3" fill="none"/></svg>
<div class="t" style="left:66px;top:731px;letter-spacing:0.6px">Display Widgets</div>
<svg style="left:5px;top:754px" width="22" height="22" viewBox="0 0 22 22"><path d="M2 4c-1-3 3-4 5-2" stroke="#222" stroke-width="1.1" fill="none"/><path d="M3 5c0 4 1 8 4 12" stroke="#aaa" stroke-width=".6" fill="none"/><path d="M5 3.5L12 2.5 21 11.5 13.5 19 4.5 10z" fill="#f0a040" stroke="#222" stroke-width="1.3" stroke-linejoin="round"/><path d="M8 6l4-.5 6.5 6-5 5-6-6z" fill="#fff"/></svg>
<div class="t" style="left:33px;top:755px;letter-spacing:0.28px">Label</div>
<svg style="left:5px;top:778px" width="22" height="22" viewBox="0 0 22 22"><rect x="1.5" y="1.5" width="19" height="19" rx="2" fill="#000" opacity=".18" transform="translate(1 1)"/><rect x="1.5" y="1.5" width="19" height="19" rx="2" fill="url(#ig)" stroke="#444" stroke-width="1"/><text x="2.6" y="16" font-family="Liberation Serif" font-style="italic" font-size="14" fill="#1a7a1a">A</text><path d="M3 17.3h9" stroke="#1a7a1a" stroke-width="1.3"/><path d="M15.5 4.5v13M13.8 4.5h3.4M13.8 17.5h3.4" stroke="#222" stroke-width="1.1"/></svg>
<div class="t" style="left:33px;top:779px;letter-spacing:0.28px">Text Browser</div>
<svg style="left:5px;top:802px" width="22" height="22" viewBox="0 0 22 22"><circle cx="13" cy="14" r="7.5" fill="#2a68b8"/><path d="M0.5 4l9-3.5 4 11-9 3.5z" fill="#58a8e8" stroke="#ccc" stroke-width=".5"/><path d="M2 11.5l4-2 2 4" fill="#3a9a20"/><circle cx="9" cy="3.5" r="1.5" fill="#f0e040"/><text x="4.5" y="18.5" font-family="Liberation Serif" font-size="9" fill="#eee" stroke="#999" stroke-width=".3">abc</text></svg>
<div class="t" style="left:33px;top:803px;letter-spacing:0.28px">Graphics View</div>
<svg style="left:5px;top:826px" width="22" height="22" viewBox="0 0 22 22"><rect x="1" y="1" width="20.5" height="20.5" fill="#000" opacity=".2" transform="translate(.8 .8)"/><rect x="0.5" y="0.5" width="20.5" height="20.5" fill="#f4f4f4" stroke="#666" stroke-width=".8"/><rect x="1" y="1" width="20" height="5.5" fill="#3a6ac0"/><circle cx="7.5" cy="3.5" r=".8" fill="#fff"/><circle cx="14" cy="3.5" r=".8" fill="#fff"/><path d="M1 1v20.5" stroke="#333" stroke-width="2"/><text x="3.6" y="18.5" font-family="Liberation Sans" font-size="12" font-weight="bold" fill="#b81a1a">12</text></svg>
<div class="t" style="left:33px;top:827px;letter-spacing:0.28px">Calendar Widget</div>
<svg style="left:5px;top:850px" width="22" height="22" viewBox="0 0 22 22"><rect x="1.5" y="1.5" width="18.5" height="19" rx="2" fill="#000" opacity=".18" transform="translate(1 1)"/><rect x="1.5" y="1.5" width="18.5" height="19" rx="2" fill="url(#ig)" stroke="#333" stroke-width="1"/><text x="3.3" y="15.5" font-family="Liberation Mono" font-size="11" fill="#126a12" letter-spacing="-1">42.</text></svg>
<div class="t" style="left:33px;top:851px;letter-spacing:0.28px">LCD Number</div>
<svg style="left:5px;top:874px" width="22" height="22" viewBox="0 0 22 22"><rect x="1.5" y="10" width="19" height="9.5" fill="#000" opacity=".2"/><rect x="0.8" y="9.3" width="19" height="9.5" fill="#eee" stroke="#111" stroke-width="1.3"/><rect x="2.3" y="10.8" width="3.5" height="6.5" fill="#2a7a10"/><rect x="6.3" y="10.8" width="3.5" height="6.5" fill="#6aa050"/><rect x="10.3" y="10.8" width="3.5" height="6.5" fill="#b0c8a0"/><rect x="14.3" y="10.8" width="4" height="6.5" fill="#d8d8d8"/></svg>
<div class="t" style="left:33px;top:875px;letter-spacing:0.28px">Progress Bar</div>
<svg style="left:5px;top:898px" width="22" height="22" viewBox="0 0 22 22"><rect x="4" y="2.4" width="14" height="1.8" fill="#111"/><rect x="4" y="6" width="14" height="2.4" fill="#111"/><rect x="4" y="10.1" width="14" height="3" fill="#111"/><rect x="4" y="14.9" width="14" height="3.9" fill="#111"/></svg>
<div class="t" style="left:33px;top:899px;letter-spacing:0.28px">Horizontal Line</div>
<svg style="left:5px;top:922px" width="22" height="22" viewBox="0 0 22 22"><rect x="3" y="4" width="1.4" height="13.8" fill="#111"/><rect x="6.4" y="4" width="2" height="13.8" fill="#111"/><rect x="10.4" y="4" width="3" height="13.8" fill="#111"/><rect x="15.2" y="4" width="3.8" height="13.8" fill="#111"/></svg>
<div class="t" style="left:33px;top:923px;letter-spacing:0.28px">Vertical Line</div>
<svg style="left:5px;top:946px" width="22" height="22" viewBox="0 0 22 22"><rect x="0.5" y="2.5" width="21" height="17" fill="url(#hp)" stroke="#3a7ad8"/></svg>
<div class="t" style="left:33px;top:947px;letter-spacing:0.28px">OpenGL Widget</div>
<svg style="left:5px;top:970px" width="22" height="22" viewBox="0 0 22 22"><path d="M3 15.5L19 5.5 19 19 14 15.5 11 18.5 11 14z" fill="#dcdcdc" stroke="#999" stroke-width=".8" stroke-linejoin="round"/><path d="M11 14l8-8.5" stroke="#aaa" stroke-width=".6"/></svg>
<div class="t" style="left:33px;top:971px;letter-spacing:0.28px">QQuickWidget</div>
<div style="left:1408px;top:96px;width:512px;height:23px;background:#dadada;border:1px solid #c6c6c6;border-bottom-color:#b4b4b4"></div>
<div class="t" style="left:1413px;top:97px;font-size:15px">对象查看器</div>
<svg style="left:1875px;top:102px" width="11" height="11" viewBox="0 0 11 11"><rect x="3.2" y="0.8" width="6.5" height="6.5" fill="#bbb" stroke="#222" stroke-width="1.5"/><path d="M3.2 1.2h6.5" stroke="#222" stroke-width="2"/><rect x="0.8" y="4.8" width="6.6" height="5.6" fill="#f2f2f2" stroke="#333" stroke-width="1.5"/><path d="M0.8 5.3h6.6" stroke="#222" stroke-width="1.6"/></svg>
<svg style="left:1901px;top:103px" width="10" height="10" viewBox="0 0 10 10"><path d="M0.7 0.7L9.3 9.3M9.3 0.7L0.7 9.3" stroke="#333" stroke-width="1.9"/></svg>
<div style="left:1409px;top:122px;width:510px;height:23px;background:#fff;border-bottom:1px solid #7a7a7a"></div>
<svg style="left:1410px;top:123px" width="54" height="22" viewBox="0 0 54 22"><text transform="scale(0.9,1)" x="4.44 13.33 22.22 31.11 40.00 48.89" y="16" text-anchor="middle" font-family="Liberation Mono" font-size="15" fill="#7c7c7c" >Filter</text></svg>
<div style="left:1408px;top:152px;width:512px;height:197px;background:#fff;border:1px solid #828790"></div>
<div style="left:1541px;top:153px;width:1px;height:29px;background:#e5e5e5"></div>
<div class="t" style="left:1414px;top:158px;font-size:15px">对象</div>
<div class="t" style="left:1546px;top:158px;font-size:15px">类</div>
<div style="left:1898px;top:153px;width:19px;height:195px;background:#f0f0f0;border-left:1px solid #e8e8e8"></div>
<svg style="left:1903px;top:159px" width="11" height="9" viewBox="0 0 11 9"><path d="M0.5 8.5L5.5 1 10.5 8.5z" fill="#a6a6a6" stroke="#a6a6a6" stroke-linejoin="round"/></svg>
<svg style="left:1903px;top:331px" width="11" height="9" viewBox="0 0 11 9"><path d="M0.5 0.5L5.5 8 10.5 0.5z" fill="#a6a6a6" stroke="#a6a6a6" stroke-linejoin="round"/></svg>
<div style="left:1460px;top:206px;width:438px;height:22px;background:#cce4f7"></div>
<div style="left:1460px;top:206px;width:82px;height:22px;border:1px dotted #202020"></div>
<div style="left:1459px;top:250px;width:439px;height:22px;background:#f3f3f3"></div>
<div style="left:1459px;top:294px;width:439px;height:22px;background:#f3f3f3"></div>
<svg style="left:1415px;top:191px" width="11" height="7" viewBox="0 0 11 7"><path d="M1 1l4.5 4.5L10 1" stroke="#222" stroke-width="1.3" fill="none"/></svg>
<svg style="left:1437px;top:184px" width="20" height="20" viewBox="0 0 20 20"><rect x="0.5" y="0.5" width="7" height="4" fill="#8ab0d8" stroke="#456"/><rect x="8.5" y="0.5" width="7" height="4" fill="#8ab0d8" stroke="#456"/><rect x="0.5" y="6.5" width="7" height="4" fill="#8ab0d8" stroke="#456"/><rect x="0.5" y="12.5" width="7" height="4" fill="#8ab0d8" stroke="#456"/><circle cx="13" cy="13" r="6" fill="#d02020" stroke="#701010"/><path d="M10 16l6-6" stroke="#fff" stroke-width="1.6"/><circle cx="13" cy="13" r="3.2" fill="none" stroke="#fff" stroke-width="1"/></svg>
<div class="t" style="left:1463px;top:184px;">Dialog</div>
<div class="t" style="left:1545px;top:184px;">QDialog</div>
<div class="t" style="left:1462px;top:206px;">buttonBox</div>
<div class="t" style="left:1545px;top:206px;">QDialogButtonBox</div>
<div class="t" style="left:1462px;top:228px;">checkBox</div>
<div class="t" style="left:1545px;top:228px;">QCheckBox</div>
<div class="t" style="left:1462px;top:250px;">label</div>
<div class="t" style="left:1545px;top:250px;">QLabel</div>
<div class="t" style="left:1462px;top:272px;">lineEdit</div>
<div class="t" style="left:1545px;top:272px;">QLineEdit</div>
<div class="t" style="left:1462px;top:294px;">pus...ton</div>
<div class="t" style="left:1545px;top:294px;">QPushButton</div>
<div style="left:1409px;top:155px;width:509px;height:194px;border:2px solid #f00"></div>
<div style="left:1408px;top:353px;width:512px;height:23px;background:#dadada;border:1px solid #c6c6c6;border-bottom-color:#b4b4b4"></div>
<div class="t" style="left:1413px;top:354px;font-size:15px">属性编辑器</div>
<svg style="left:1875px;top:359px" width="11" height="11" viewBox="0 0 11 11"><rect x="3.2" y="0.8" width="6.5" height="6.5" fill="#bbb" stroke="#222" stroke-width="1.5"/><path d="M3.2 1.2h6.5" stroke="#222" stroke-width="2"/><rect x="0.8" y="4.8" width="6.6" height="5.6" fill="#f2f2f2" stroke="#333" stroke-width="1.5"/><path d="M0.8 5.3h6.6" stroke="#222" stroke-width="1.6"/></svg>
<svg style="left:1901px;top:360px" width="10" height="10" viewBox="0 0 10 10"><path d="M0.7 0.7L9.3 9.3M9.3 0.7L0.7 9.3" stroke="#333" stroke-width="1.9"/></svg>
<div style="left:1411px;top:387px;width:395px;height:23px;background:#fff;border-bottom:1px solid #7a7a7a"></div>
<svg style="left:1412px;top:388px" width="54" height="22" viewBox="0 0 54 22"><text transform="scale(0.9,1)" x="4.44 13.33 22.22 31.11 40.00 48.89" y="16" text-anchor="middle" font-family="Liberation Mono" font-size="15" fill="#7c7c7c" >Filter</text></svg>
<svg style="left:1813px;top:386px" width="28" height="27" viewBox="0 0 28 27"><defs><linearGradient id="plg" x1="0" y1="0" x2="0" y2="1"><stop offset="0" stop-color="#60f060"/><stop offset="1" stop-color="#10b010"/></linearGradient></defs><path d="M8.5 0.5h5a1 1 0 0 1 1 1v7h7a1 1 0 0 1 1 1v4.5a1 1 0 0 1-1 1h-7v7a1 1 0 0 1-1 1h-5a1 1 0 0 1-1-1v-7h-7a1 1 0 0 1-1-1v-4.5a1 1 0 0 1 1-1h7v-7a1 1 0 0 1 1-1z" fill="url(#plg)" stroke="#0a9a0a" stroke-linejoin="round"/><path d="M10 2.5v7M2.5 10.5h7" stroke="#b8ffb8" stroke-width="1.2" opacity=".8"/><path d="M19.5 22h7l-3.5 4z" fill="#000"/></svg>
<svg style="left:1850px;top:394px" width="24" height="8" viewBox="0 0 24 8"><rect x="1" y="0.5" width="22" height="6" rx="1" fill="#d6d6d6" stroke="#8c8c8c"/></svg>
<svg style="left:1886px;top:386px" width="30" height="27" viewBox="0 0 30 27"><path d="M3 22.5L18 7.5" stroke="#666" stroke-width="3.6" stroke-linecap="round"/><path d="M3 22.5L18 7.5" stroke="#e8e8e8" stroke-width="1.4" stroke-linecap="round"/><path d="M16.5 8.5a4.2 4.2 0 0 1 4.5-7l-1.6 2.4 1.4 1.6 2.6-1.4a4.2 4.2 0 0 1-6.4 4.8z" fill="#d8d8d8" stroke="#888" stroke-width=".8"/><circle cx="18.6" cy="6.4" r="1" fill="#333"/><path d="M21 22h7l-3.5 4z" fill="#000"/></svg>
<div style="left:1408px;top:418px;width:512px;height:20px;background:#f0f0f0;border:1px solid #cfcfcf"></div>
<svg style="left:1410px;top:418px" width="230" height="22" viewBox="0 0 230 22"><text transform="scale(0.9,1)" x="4.44 13.33 22.22 31.11 40.00 48.89 57.78 66.67 75.56 84.44 93.33 102.22 111.11 120.00 128.89 137.78 146.67 155.56 164.44 173.33 182.22 191.11 200.00 208.89 217.78 226.67 235.56 244.44" y="16" text-anchor="middle" font-family="Liberation Mono" font-size="15" fill="#111" >buttonBox : QDialogButtonBox</text></svg>
<div style="left:1408px;top:438px;width:512px;height:319px;background:#fff;border:1px solid #828790"></div>
<div style="left:1558px;top:439px;width:1px;height:28px;background:#e5e5e5"></div>
<div class="t" style="left:1414px;top:443px;font-size:15px">属性</div>
<div class="t" style="left:1564px;top:443px;font-size:15px">值</div>
<div style="left:1898px;top:439px;width:21px;height:317px;background:#f0f0f0;border-left:1px solid #e4e4e4"></div>
<div style="left:1906px;top:460px;width:6px;height:100px;background:#898989"></div>
<div style="left:1409px;top:467px;width:489px;height:24px;background:#a0a0a0"></div>
<svg style="left:1413px;top:476px" width="11" height="7" viewBox="0 0 11 7"><path d="M1 1l4.5 4.5L10 1" stroke="#222" stroke-width="1.3" fill="none"/></svg>
<div class="t" style="left:1432px;top:469px;color:#fff;font-weight:bold;font-size:16px">QObject</div>
<div style="left:1409px;top:491px;width:489px;height:24px;background:#fdf0e1"></div>
<div style="left:1409px;top:491px;width:25px;height:24px;background:#fee3c4"></div>
<div style="left:1558px;top:491px;width:1px;height:24px;background:#d6d6d6"></div>
<div class="t" style="left:1437px;top:493px;font-weight:bold;letter-spacing:0.3px">objectName</div>
<div class="t" style="left:1562px;top:493px;">buttonBox</div>
<div style="left:1409px;top:515px;width:489px;height:24px;background:#a0a0a0"></div>
<svg style="left:1413px;top:524px" width="11" height="7" viewBox="0 0 11 7"><path d="M1 1l4.5 4.5L10 1" stroke="#222" stroke-width="1.3" fill="none"/></svg>
<div class="t" style="left:1432px;top:517px;color:#fff;font-weight:bold;font-size:16px">QWidget</div>
<div style="left:1409px;top:539px;width:489px;height:24px;background:#fffde3"></div>
<div style="left:1409px;top:539px;width:25px;height:24px;background:#fffbc9"></div>
<div style="left:1558px;top:539px;width:1px;height:24px;background:#d6d6d6"></div>
<div class="t" style="left:1437px;top:541px;letter-spacing:0.25px">enabled</div>
<svg style="left:1562px;top:543px" width="16" height="16" viewBox="0 0 16 16"><rect x="0" y="0" width="16" height="16" rx="3" fill="#1560c8"/><path d="M4 8.2l2.6 2.6L12 5.4" stroke="#fff" stroke-width="1.4" fill="none"/></svg>
<div style="left:1409px;top:563px;width:489px;height:24px;background:#fffbc9"></div>
<div style="left:1409px;top:563px;width:25px;height:24px;background:#fffbc9"></div>
<div style="left:1409px;top:563px;width:489px;height:1px;background:#d6d6d6"></div>
<div style="left:1558px;top:563px;width:1px;height:24px;background:#d6d6d6"></div>
<svg style="left:1417px;top:570px" width="7" height="11" viewBox="0 0 7 11"><path d="M1 1l4.5 4.5L1 10" stroke="#555" stroke-width="1.2" fill="none"/></svg>
<div class="t" style="left:1437px;top:565px;font-weight:bold;letter-spacing:0.3px">geometry</div>
<div class="t" style="left:1562px;top:565px;">[(30, 240), 341 x 32]</div>
<div style="left:1409px;top:587px;width:489px;height:24px;background:#fffde3"></div>
<div style="left:1409px;top:587px;width:25px;height:24px;background:#fffbc9"></div>
<div style="left:1409px;top:587px;width:489px;height:1px;background:#d6d6d6"></div>
<div style="left:1558px;top:587px;width:1px;height:24px;background:#d6d6d6"></div>
<svg style="left:1417px;top:594px" width="7" height="11" viewBox="0 0 7 11"><path d="M1 1l4.5 4.5L1 10" stroke="#555" stroke-width="1.2" fill="none"/></svg>
<div class="t" style="left:1437px;top:589px;letter-spacing:0.25px">sizePolicy</div>
<div class="t" style="left:1562px;top:589px;">[Expanding, Fixed, 0, 0]</div>
<div style="left:1409px;top:611px;width:489px;height:24px;background:#fffbc9"></div>
<div style="left:1409px;top:611px;width:25px;height:24px;background:#fffbc9"></div>
<div style="left:1409px;top:611px;width:489px;height:1px;background:#d6d6d6"></div>
<div style="left:1558px;top:611px;width:1px;height:24px;background:#d6d6d6"></div>
<svg style="left:1417px;top:618px" width="7" height="11" viewBox="0 0 7 11"><path d="M1 1l4.5 4.5L1 10" stroke="#555" stroke-width="1.2" fill="none"/></svg>
<div class="t" style="left:1437px;top:613px;letter-spacing:0.25px">minimumSize</div>
<div class="t" style="left:1562px;top:613px;">0 x 0</div>
<div style="left:1409px;top:635px;width:489px;height:24px;background:#fffde3"></div>
<div style="left:1409px;top:635px;width:25px;height:24px;background:#fffbc9"></div>
<div style="left:1409px;top:635px;width:489px;height:1px;background:#d6d6d6"></div>
<div style="left:1558px;top:635px;width:1px;height:24px;background:#d6d6d6"></div>
<svg style="left:1417px;top:642px" width="7" height="11" viewBox="0 0 7 11"><path d="M1 1l4.5 4.5L1 10" stroke="#555" stroke-width="1.2" fill="none"/></svg>
<div class="t" style="left:1437px;top:637px;letter-spacing:0.25px">maximumSize</div>
<div class="t" style="left:1562px;top:637px;">16777215 x 16777215</div>
<div style="left:1409px;top:659px;width:489px;height:24px;background:#fffbc9"></div>
<div style="left:1409px;top:659px;width:25px;height:24px;background:#fffbc9"></div>
<div style="left:1409px;top:659px;width:489px;height:1px;background:#d6d6d6"></div>
<div style="left:1558px;top:659px;width:1px;height:24px;background:#d6d6d6"></div>
<svg style="left:1417px;top:666px" width="7" height="11" viewBox="0 0 7 11"><path d="M1 1l4.5 4.5L1 10" stroke="#555" stroke-width="1.2" fill="none"/></svg>
<div class="t" style="left:1437px;top:661px;letter-spacing:0.25px">sizeIncrement</div>
<div class="t" style="left:1562px;top:661px;">0 x 0</div>
<div style="left:1409px;top:683px;width:489px;height:24px;background:#fffde3"></div>
<div style="left:1409px;top:683px;width:25px;height:24px;background:#fffbc9"></div>
<div style="left:1409px;top:683px;width:489px;height:1px;background:#d6d6d6"></div>
<div style="left:1558px;top:683px;width:1px;height:24px;background:#d6d6d6"></div>
<svg style="left:1417px;top:690px" width="7" height="11" viewBox="0 0 7 11"><path d="M1 1l4.5 4.5L1 10" stroke="#555" stroke-width="1.2" fill="none"/></svg>
<div class="t" style="left:1437px;top:685px;letter-spacing:0.25px">baseSize</div>
<div class="t" style="left:1562px;top:685px;">0 x 0</div>
<div style="left:1409px;top:707px;width:489px;height:24px;background:#fffbc9"></div>
<div style="left:1409px;top:707px;width:25px;height:24px;background:#fffbc9"></div>
<div style="left:1409px;top:707px;width:489px;height:1px;background:#d6d6d6"></div>
<div style="left:1558px;top:707px;width:1px;height:24px;background:#d6d6d6"></div>
<div class="t" style="left:1437px;top:709px;letter-spacing:0.25px">palette</div>
<div class="t" style="left:1562px;top:709px;">继承</div>
<div style="left:1409px;top:731px;width:489px;height:24px;background:#fffde3"></div>
<div style="left:1409px;top:731px;width:25px;height:24px;background:#fffbc9"></div>
<div style="left:1409px;top:731px;width:489px;height:1px;background:#d6d6d6"></div>
<div style="left:1558px;top:731px;width:1px;height:24px;background:#d6d6d6"></div>
<svg style="left:1417px;top:738px" width="7" height="11" viewBox="0 0 7 11"><path d="M1 1l4.5 4.5L1 10" stroke="#555" stroke-width="1.2" fill="none"/></svg>
<div class="t" style="left:1437px;top:733px;letter-spacing:0.25px">font</div>
<div class="t" style="left:1564px;top:733px;font-family:'Liberation Serif';font-size:18px">A</div>
<div class="t" style="left:1584px;top:733px;">[SimSun, 9]</div>
<div style="left:1408px;top:763px;width:512px;height:23px;background:#dadada;border:1px solid #c6c6c6;border-bottom-color:#b4b4b4"></div>
<div class="t" style="left:1413px;top:764px;font-size:15px">资源浏览器</div>
<svg style="left:1875px;top:769px" width="11" height="11" viewBox="0 0 11 11"><rect x="3.2" y="0.8" width="6.5" height="6.5" fill="#bbb" stroke="#222" stroke-width="1.5"/><path d="M3.2 1.2h6.5" stroke="#222" stroke-width="2"/><rect x="0.8" y="4.8" width="6.6" height="5.6" fill="#f2f2f2" stroke="#333" stroke-width="1.5"/><path d="M0.8 5.3h6.6" stroke="#222" stroke-width="1.6"/></svg>
<svg style="left:1901px;top:770px" width="10" height="10" viewBox="0 0 10 10"><path d="M0.7 0.7L9.3 9.3M9.3 0.7L0.7 9.3" stroke="#333" stroke-width="1.9"/></svg>
<svg style="left:1411px;top:791px" width="26" height="26" viewBox="0 0 26 26"><defs><linearGradient id="pg" x1="0" y1="0" x2="1" y2="1"><stop offset="0" stop-color="#f8d060"/><stop offset="1" stop-color="#d89010"/></linearGradient><radialGradient id="rg" cx=".5" cy=".8" r=".8"><stop offset="0" stop-color="#20e020"/><stop offset=".6" stop-color="#109a10"/><stop offset="1" stop-color="#0a6a0a"/></radialGradient></defs><path d="M5 20L20 5" stroke="#b08020" stroke-width="5" stroke-linecap="butt"/><path d="M5 20L20 5" stroke="url(#pg)" stroke-width="3.6"/><path d="M19.5 5.5l2-2" stroke="#c86428" stroke-width="4.6" stroke-linecap="round"/><path d="M18.2 6.8l1.6-1.6" stroke="#ddd" stroke-width="4.4"/><path d="M6.5 18.5L2.5 23.5 3.5 19.5z" fill="#f0d8a0"/><path d="M3.5 22.2L2.3 23.7 4.2 23z" fill="#555"/></svg>
<svg style="left:1441px;top:791px" width="24" height="24" viewBox="0 0 24 24"><path d="M18.20 16.19A6.8 6.8 0 1 1 17.77 9.10" stroke="url(#rg)" stroke-width="6" fill="none"/><path d="M22 3.5V12.6H13.2z" fill="#14a014" stroke="#0a7a0a" stroke-width=".6" stroke-linejoin="round"/></svg>
<div style="left:1694px;top:793px;width:224px;height:23px;background:#fff;border-bottom:1px solid #7a7a7a"></div>
<svg style="left:1695px;top:794px" width="54" height="22" viewBox="0 0 54 22"><text transform="scale(0.9,1)" x="4.44 13.33 22.22 31.11 40.00 48.89" y="16" text-anchor="middle" font-family="Liberation Mono" font-size="15" fill="#7c7c7c" >Filter</text></svg>
<div style="left:1408px;top:820px;width:254px;height:153px;background:#fff;border:1px solid #828790"></div>
<div style="left:1667px;top:820px;width:253px;height:153px;background:#fff;border:1px solid #828790"></div>
<div class="t" style="left:1438px;top:822px;letter-spacing:0.5px">&lt;resource root&gt;</div>
<div style="left:1410px;top:973px;width:126px;height:21px;background:#f2f2f2;border:1px solid #e2e2e2;border-top:none"></div>
<div style="left:1537px;top:973px;width:103px;height:21px;background:#f2f2f2;border:1px solid #e2e2e2;border-top:none"></div>
<div style="left:1640px;top:972px;width:106px;height:23px;background:#fafafa;border:1px solid #e2e2e2;border-top:none"></div>
<div class="t" style="left:1424px;top:971px;font-size:14.6px;font-weight:300">信号<span style='display:inline-block;width:7.3px;text-align:center'>/</span>槽编辑器</div>
<div class="t" style="left:1552px;top:971px;font-size:14.6px;font-weight:300">动作编辑器</div>
<div class="t" style="left:1657px;top:972px;font-size:14.6px;font-weight:300">资源浏览器</div>
<div style="left:0px;top:96px;width:256px;height:23px;background:#dadada;border:1px solid #c6c6c6;border-bottom-color:#b4b4b4"></div>
<div class="t" style="left:5px;top:98px;font-size:16px">Widget Box</div>
<svg style="left:211px;top:102px" width="11" height="11" viewBox="0 0 11 11"><rect x="3.2" y="0.8" width="6.5" height="6.5" fill="#bbb" stroke="#222" stroke-width="1.5"/><path d="M3.2 1.2h6.5" stroke="#222" stroke-width="2"/><rect x="0.8" y="4.8" width="6.6" height="5.6" fill="#f2f2f2" stroke="#333" stroke-width="1.5"/><path d="M0.8 5.3h6.6" stroke="#222" stroke-width="1.6"/></svg>
<svg style="left:237px;top:103px" width="10" height="10" viewBox="0 0 10 10"><path d="M0.7 0.7L9.3 9.3M9.3 0.7L0.7 9.3" stroke="#333" stroke-width="1.9"/></svg>
<div style="left:3px;top:124px;width:249px;height:23px;background:#fff;border-bottom:1px solid #7a7a7a"></div>
<svg style="left:4px;top:125px" width="54" height="22" viewBox="0 0 54 22"><text transform="scale(0.9,1)" x="4.44 13.33 22.22 31.11 40.00 48.89" y="16" text-anchor="middle" font-family="Liberation Mono" font-size="15" fill="#7c7c7c" >Filter</text></svg>
</body></html>
